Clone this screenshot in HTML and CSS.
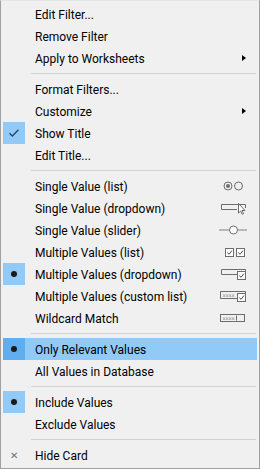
FILE: index.html
```html
<!DOCTYPE html>
<html>
<head>
<meta charset="utf-8">
<link rel="stylesheet" href="styles.css">
</head>
<body>
<div class="menu">
  <div class="item"><span class="gut"></span><span class="label">Edit Filter...</span></div>
  <div class="item"><span class="gut"></span><span class="label">Remove Filter</span></div>
  <div class="item"><span class="gut"></span><span class="label">Apply to Worksheets</span><span class="arrow"></span></div>
  <div class="sep"></div>
  <div class="item"><span class="gut"></span><span class="label">Format Filters...</span></div>
  <div class="item"><span class="gut"></span><span class="label">Customize</span><span class="arrow"></span></div>
  <div class="item"><span class="gut on"><svg width="12" height="10" viewBox="0 0 12 10"><path d="M1.5 5.2 L4.3 8 L10.5 1.8" fill="none" stroke="#2a4766" stroke-width="1.4"/></svg></span><span class="label">Show Title</span></div>
  <div class="item"><span class="gut"></span><span class="label">Edit Title...</span></div>
  <div class="sep"></div>
  <div class="item"><span class="gut"></span><span class="label">Single Value (list)</span>
    <svg class="ic" width="28" height="12" viewBox="0 0 28 12"><circle cx="9" cy="6" r="4" fill="none" stroke="#6d6d6d"/><circle cx="9" cy="6" r="2" fill="#6d6d6d"/><circle cx="19.5" cy="6" r="4" fill="none" stroke="#6d6d6d"/></svg></div>
  <div class="item"><span class="gut"></span><span class="label">Single Value (dropdown)</span>
    <svg class="ic" width="28" height="14" viewBox="0 0 28 14"><path d="M19 3.5 H2.5 V8.5 H18" fill="none" stroke="#6d6d6d"/><path d="M19 3.5 H26.5 V7" fill="none" stroke="#6d6d6d"/><path d="M19.5 2.5 V12 L21.6 10 L23.2 13.3 L24.6 12.6 L23 9.5 L26 9.5 Z" fill="#fff" stroke="#5a5a5a" stroke-width="0.9" stroke-linejoin="round"/></svg></div>
  <div class="item"><span class="gut"></span><span class="label">Single Value (slider)</span>
    <svg class="ic" width="28" height="12" viewBox="0 0 28 12"><path d="M0 6 H10 M19 6 H28" stroke="#a5a5a5" stroke-width="1.4"/><circle cx="14.5" cy="6" r="4" fill="#fff" stroke="#6d6d6d"/></svg></div>
  <div class="item"><span class="gut"></span><span class="label">Multiple Values (list)</span>
    <svg class="ic" width="28" height="12" viewBox="0 0 28 12"><rect x="6.5" y="2.5" width="8" height="8" fill="#fff" stroke="#6d6d6d"/><path d="M8.3 6.6 L10.1 8.3 L12.9 4.6" fill="none" stroke="#4a4a4a"/><rect x="17.5" y="2.5" width="8" height="8" fill="#fff" stroke="#6d6d6d"/><path d="M19.3 6.6 L21.1 8.3 L23.9 4.6" fill="none" stroke="#4a4a4a"/></svg></div>
  <div class="item"><span class="gut dot"></span><span class="label">Multiple Values (dropdown)</span>
    <svg class="ic" width="28" height="14" viewBox="0 0 28 14"><path d="M18 2.5 H2.5 V7.5 H18" fill="none" stroke="#6d6d6d"/><path d="M18 2.5 H26.5 V4.5" fill="none" stroke="#6d6d6d"/><rect x="18.5" y="4.5" width="8" height="8" fill="#fff" stroke="#6d6d6d"/><path d="M20.3 8.6 L22.1 10.3 L24.9 6.6" fill="none" stroke="#4a4a4a"/></svg></div>
  <div class="item"><span class="gut"></span><span class="label">Multiple Values (custom list)</span>
    <svg class="ic" width="28" height="14" viewBox="0 0 28 14"><path d="M18 2.5 H1.5 V9.5 H18" fill="none" stroke="#6d6d6d"/><path d="M18 2.5 H26.5 V4.5" fill="none" stroke="#6d6d6d"/><text x="3.4" y="8.2" font-family="DejaVu Sans" font-size="5.2" fill="#8a8a8a">xxxx</text><rect x="18.5" y="4.5" width="8" height="8" fill="#fff" stroke="#6d6d6d"/><path d="M20.3 8.6 L22.1 10.3 L24.9 6.6" fill="none" stroke="#4a4a4a"/></svg></div>
  <div class="item"><span class="gut"></span><span class="label">Wildcard Match</span>
    <svg class="ic" width="28" height="12" viewBox="0 0 28 12"><rect x="1.5" y="2.5" width="24" height="7" fill="none" stroke="#6d6d6d"/><text x="3.4" y="8.2" font-family="DejaVu Sans" font-size="5.2" fill="#8a8a8a">xxxx</text><path d="M17.5 3.5 V8.5" stroke="#6d6d6d"/></svg></div>
  <div class="sep"></div>
  <div class="item hl"><span class="gut dot"></span><span class="label">Only Relevant Values</span></div>
  <div class="item"><span class="gut"></span><span class="label">All Values in Database</span></div>
  <div class="sep"></div>
  <div class="item"><span class="gut dot"></span><span class="label">Include Values</span></div>
  <div class="item"><span class="gut"></span><span class="label">Exclude Values</span></div>
  <div class="sep"></div>
  <div class="item"><span class="gut x">&#x2715;</span><span class="label">Hide Card</span></div>
</div>
</body>
</html>
```
FILE: styles.css
```css
html, body {
  margin: 0;
  padding: 0;
  background: #f0f0f0;
}
.menu {
  box-sizing: border-box;
  width: 260px;
  height: 469px;
  border: 1px solid #a0a0a0;
  border-top-color: #e6e6e6;
  padding: 2px;
  background: #f0f0f0;
  font-family: Roboto, "Noto Sans", sans-serif;
  font-size: 12px;
  color: #000;
}
.item {
  display: flex;
  align-items: center;
  height: 22px;
}
.item.hl {
  background: #91c9f7;
}
.gut {
  width: 22px;
  height: 22px;
  flex: none;
  display: flex;
  align-items: center;
  justify-content: center;
}
.gut.on {
  background: #91c9f7;
}
.gut.dot::before {
  content: "";
  width: 6px;
  height: 6px;
  border-radius: 50%;
  background: #1a1a1a;
}
.item .gut.dot {
  background: #91c9f7;
}
.item.hl .gut.dot {
  background: #60aef0;
}
.gut.x {
  font-size: 10px;
  color: #707070;
}
.label {
  margin-left: 10px;
  flex: 1;
  line-height: 22px;
  padding-top: 1px;
  white-space: nowrap;
}
.arrow {
  width: 0;
  height: 0;
  border-top: 3.5px solid transparent;
  border-bottom: 3.5px solid transparent;
  border-left: 4px solid #000;
  margin-right: 11px;
}
.ic {
  flex: none;
  margin-right: 10px;
}
.sep {
  height: 1px;
  margin: 4px 1px 4px 28px;
  background: #d2d2d2;
}
```
